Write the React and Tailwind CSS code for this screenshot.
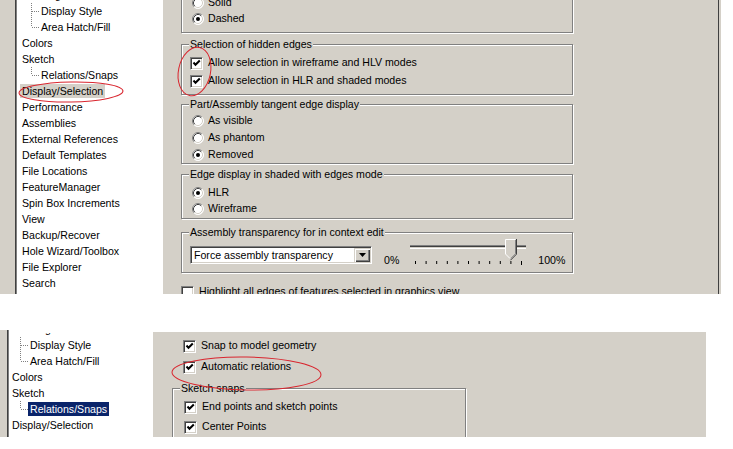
import React from 'react';

const TOP_TREE = [
  { label: 'Drawings' },
  { label: 'Display Style', child: 'mid' },
  { label: 'Area Hatch/Fill', child: 'last' },
  { label: 'Colors' },
  { label: 'Sketch' },
  { label: 'Relations/Snaps', child: 'last' },
  { label: 'Display/Selection', selected: 'gray' },
  { label: 'Performance' },
  { label: 'Assemblies' },
  { label: 'External References' },
  { label: 'Default Templates' },
  { label: 'File Locations' },
  { label: 'FeatureManager' },
  { label: 'Spin Box Increments' },
  { label: 'View' },
  { label: 'Backup/Recover' },
  { label: 'Hole Wizard/Toolbox' },
  { label: 'File Explorer' },
  { label: 'Search' },
];

const BOTTOM_TREE = [
  { label: 'Drawings' },
  { label: 'Display Style', child: 'mid' },
  { label: 'Area Hatch/Fill', child: 'last' },
  { label: 'Colors' },
  { label: 'Sketch' },
  { label: 'Relations/Snaps', child: 'last', selected: 'blue' },
  { label: 'Display/Selection' },
  { label: 'Performance' },
];

function Connector({ kind }) {
  return (
    <svg width="8" height="16" className="shrink-0">
      <line x1="0.5" y1="0" x2="0.5" y2={kind === 'last' ? 8 : 16} stroke="#808080" strokeDasharray="1 1" />
      <line x1="1" y1="8.5" x2="8" y2="8.5" stroke="#808080" strokeDasharray="1 1" />
    </svg>
  );
}

function TreeRow({ item, indent }) {
  let label = 'px-[2px] h-[14px] leading-[14px]';
  if (item.selected === 'gray') label += ' bg-[#d4d0c8]';
  if (item.selected === 'blue') label += ' bg-[#0a246a] text-white';
  return (
    <div className="flex h-[16px] items-center whitespace-nowrap">
      {item.child && (
        <div className={indent}>
          <Connector kind={item.child} />
        </div>
      )}
      <span className={label}>{item.label}</span>
    </div>
  );
}

function Radio({ on }) {
  return (
    <svg width="12" height="12" className="shrink-0">
      <circle cx="6" cy="6" r="5.5" fill="#fff" />
      <path d="M2.11 9.89 A5.5 5.5 0 0 1 9.89 2.11" fill="none" stroke="#808080" />
      <path d="M9.89 2.11 A5.5 5.5 0 0 1 2.11 9.89" fill="none" stroke="#fff" />
      <path d="M2.82 9.18 A4.5 4.5 0 0 1 9.18 2.82" fill="none" stroke="#404040" />
      <path d="M9.18 2.82 A4.5 4.5 0 0 1 2.82 9.18" fill="none" stroke="#d4d0c8" />
      {on && <circle cx="6" cy="6" r="2" fill="#000" />}
    </svg>
  );
}

function Check({ on }) {
  return (
    <div className="flex h-[13px] w-[13px] shrink-0 items-center justify-center border border-t-[#808080] border-l-[#808080] border-b-white border-r-white bg-white shadow-[inset_1px_1px_0_#404040,inset_-1px_-1px_0_#d4d0c8]">
      {on && (
        <svg width="9" height="9" viewBox="0 0 9 9">
          <path d="M1.5 3.5 L3.5 5.8 L7.8 1.5" fill="none" stroke="#000" strokeWidth="2" />
        </svg>
      )}
    </div>
  );
}

function RadioRow({ label, on, h }) {
  return (
    <div className={`flex items-center gap-[4px] pl-[10px] ${h}`}>
      <Radio on={on} />
      <span className="whitespace-nowrap">{label}</span>
    </div>
  );
}

function CheckRow({ label, on, h, pl = 'pl-[8px]' }) {
  return (
    <div className={`flex items-center gap-[5px] whitespace-nowrap ${pl} ${h}`}>
      <Check on={on} />
      <span>{label}</span>
    </div>
  );
}

function Group({ title, className, children }) {
  return (
    <div className={`relative shrink-0 border border-[#808080] shadow-[1px_1px_0_#fff,inset_1px_1px_0_#fff] ${className}`}>
      {title && (
        <span className="absolute left-[7px] top-[-7px] bg-[#d4d0c8] px-[1px] leading-[13px] whitespace-nowrap">{title}</span>
      )}
      {children}
    </div>
  );
}

function Slider() {
  const ticks = [];
  for (let i = 0; i <= 10; i++) {
    const x = 16.5 + i * 10.6;
    ticks.push(<line key={i} x1={x} y1="25" x2={x} y2={i === 10 ? 29 : 28} stroke="#000" />);
  }
  return (
    <svg width="133" height="30" className="shrink-0">
      <line x1="11" y1="9.5" x2="127" y2="9.5" stroke="#808080" />
      <line x1="11" y1="10.5" x2="127" y2="10.5" stroke="#404040" />
      <line x1="11" y1="11.5" x2="127" y2="11.5" stroke="#d4d0c8" />
      <line x1="11" y1="12.5" x2="127" y2="12.5" stroke="#fff" />
      {ticks}
      <path d="M106 3 L117 3 L117 18 L111.5 23.5 L106 18 Z" fill="#d4d0c8" />
      <path d="M106.5 18 L106.5 3.5 L116.5 3.5" fill="none" stroke="#fff" />
      <path d="M117.5 3 L117.5 18.2 L111.5 24.2" fill="none" stroke="#404040" />
      <path d="M116.5 4 L116.5 17.8 L111.5 22.8" fill="none" stroke="#808080" />
      <path d="M106.5 18 L111 22.5" fill="none" stroke="#fff" />
    </svg>
  );
}

function Combo() {
  return (
    <div className="mt-[10px] flex h-[18px] w-[182px] shrink-0 border border-t-[#808080] border-l-[#808080] border-b-white border-r-white bg-white shadow-[inset_1px_1px_0_#404040,inset_-1px_-1px_0_#d4d0c8] p-[1px]">
      <span className="flex-1 pl-[2px] leading-[14px] whitespace-nowrap">Force assembly transparency</span>
      <div className="flex h-[14px] w-[16px] items-center justify-center bg-[#d4d0c8] shadow-[inset_1px_1px_0_#d4d0c8,inset_2px_2px_0_#fff,inset_-1px_-1px_0_#404040,inset_-2px_-2px_0_#808080]">
        <svg width="7" height="4">
          <path d="M0 0 L7 0 L3.5 4 Z" fill="#000" />
        </svg>
      </div>
    </div>
  );
}

export default function App() {
  return (
    <div className="relative h-[449px] w-[733px] overflow-hidden bg-white text-[10.6px] text-black font-['Liberation_Sans',Arial,sans-serif]">
      {/* upper screenshot */}
      <div className="flex h-[294px]">
        <div className="w-[15px] bg-[#d4d0c8]" />
        <div className="w-[1px] bg-[#404040]" />
        <div className="w-[1px] bg-[#808080]" />
        <div className="w-[146px] overflow-hidden bg-white pl-[3px]">
          <div className="-mt-[13px]">
            {TOP_TREE.map((item) => (
              <TreeRow key={item.label} item={item} indent="ml-[11px]" />
            ))}
          </div>
        </div>
        <div className="flex w-[555px] flex-col overflow-hidden bg-[#d4d0c8] pl-[18px]">
          <Group className="-mt-[20px] h-[53px] w-[392px] pt-[14px]">
            <RadioRow label="Solid" h="h-[16px]" />
            <RadioRow label="Dashed" on h="h-[16px]" />
          </Group>
          <Group title="Selection of hidden edges" className="mt-[11px] h-[51px] w-[392px] pt-[9px]">
            <CheckRow label="Allow selection in wireframe and HLV modes" on h="h-[18px]" />
            <CheckRow label="Allow selection in HLR and shaded modes" on h="h-[18px]" />
          </Group>
          <Group title="Part/Assembly tangent edge display" className="mt-[9px] h-[60px] w-[392px] pt-[7px]">
            <RadioRow label="As visible" h="h-[17px]" />
            <RadioRow label="As phantom" h="h-[17px]" />
            <RadioRow label="Removed" on h="h-[17px]" />
          </Group>
          <Group title="Edge display in shaded with edges mode" className="mt-[10px] h-[45px] w-[392px] pt-[10px]">
            <RadioRow label="HLR" on h="h-[16px]" />
            <RadioRow label="Wireframe" h="h-[16px]" />
          </Group>
          <Group title="Assembly transparency for in context edit" className="mt-[13px] h-[41px] w-[392px] pt-[3px]">
            <div className="flex items-start pl-[8px]">
              <Combo />
              <span className="ml-[12px] mt-[18px] leading-[13px]">0%</span>
              <Slider />
              <span className="ml-[6px] mt-[18px] leading-[13px]">100%</span>
            </div>
          </Group>
          <CheckRow label="Highlight all edges of features selected in graphics view" h="mt-[10px] h-[18px] shrink-0" pl="pl-0" />
        </div>
        <div className="w-[1px] bg-[#404040]" />
        <div className="w-[2px] bg-[#d4d0c8]" />
      </div>

      {/* lower screenshot */}
      <div className="mt-[36px] flex h-[107px]">
        <div className="w-[7px] bg-[#d4d0c8]" />
        <div className="w-[1px] bg-[#404040]" />
        <div className="w-[1px] bg-[#808080]" />
        <div className="w-[144px] overflow-hidden bg-white pl-[1px]">
          <div className="mt-[3px] h-[104px] overflow-hidden">
            <div className="-mt-[12px]">
              {BOTTOM_TREE.map((item) => (
                <TreeRow key={item.label} item={item} indent="ml-[10px]" />
              ))}
            </div>
          </div>
        </div>
        <div className="mt-[2px] flex h-[105px] w-[553px] flex-col overflow-hidden bg-[#d4d0c8] pt-[5px]">
          <CheckRow label="Snap to model geometry" on h="h-[18px] shrink-0" pl="pl-[30px]" />
          <CheckRow label="Automatic relations" on h="mt-[3px] h-[18px] shrink-0" pl="pl-[30px]" />
          <div className="ml-[19px]">
            <Group title="Sketch snaps" className="mt-[12px] h-[70px] w-[294px] pt-[8px]">
              <CheckRow label="End points and sketch points" on h="h-[20px]" pl="pl-[11px]" />
              <CheckRow label="Center Points" on h="h-[20px]" pl="pl-[11px]" />
            </Group>
          </div>
        </div>
      </div>

      {/* red annotation ellipses */}
      <svg className="pointer-events-none absolute left-0 top-0" width="733" height="449">
        <ellipse cx="71" cy="92" rx="52" ry="10" fill="none" stroke="#d9252e" strokeWidth="1" transform="rotate(-1 71 92)" />
        <ellipse cx="194.5" cy="71.5" rx="16" ry="24.5" fill="none" stroke="#d9252e" strokeWidth="1" transform="rotate(12 194.5 71.5)" />
        <ellipse cx="246.5" cy="373.5" rx="74.5" ry="16.5" fill="none" stroke="#d9252e" strokeWidth="1" transform="rotate(1 246.5 373.5)" />
      </svg>
    </div>
  );
}
